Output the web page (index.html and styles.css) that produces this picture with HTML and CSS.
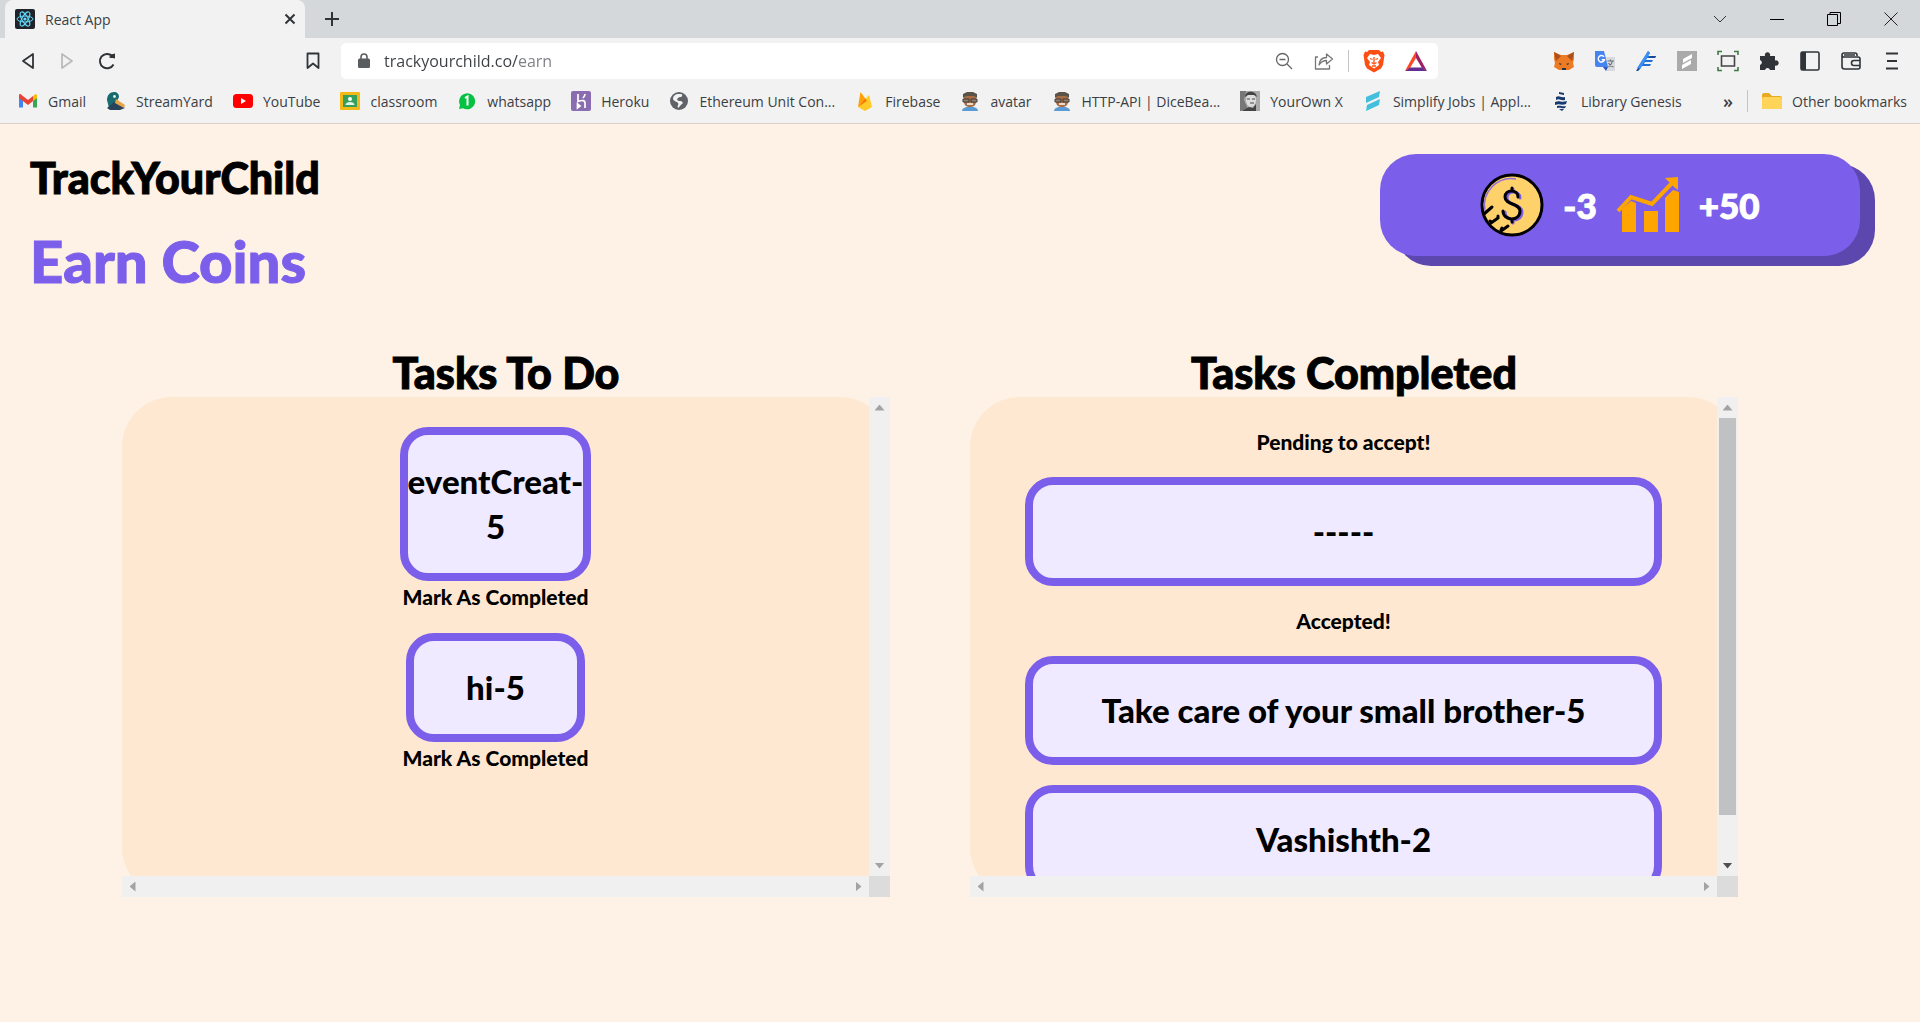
FILE: index.html
```html
<!DOCTYPE html>
<html lang="en">
<head>
  <meta charset="utf-8">
  <title>React App</title>
  <link rel="stylesheet" href="styles.css">
</head>
<body>
  <div class="browser">
    <div class="tab-strip">
      <div class="tab">
        <svg class="icon" viewBox="0 0 20 20"><rect width="20" height="20" rx="2" fill="#20232a"/><g fill="none" stroke="#61dafb"><ellipse cx="10" cy="10" rx="8" ry="3"/><ellipse cx="10" cy="10" rx="8" ry="3" transform="rotate(60 10 10)"/><ellipse cx="10" cy="10" rx="8" ry="3" transform="rotate(120 10 10)"/></g><circle cx="10" cy="10" r="1.6" fill="#61dafb"/></svg>
        <span class="tab-title">React App</span>
        <button class="icon-btn" aria-label="Close tab"><svg width="12" height="12" viewBox="0 0 12 12"><path d="M1.5 1.5l9 9m0-9l-9 9" stroke="#303438" stroke-width="2"/></svg></button>
      </div>
      <button class="icon-btn new-tab" aria-label="New tab"><svg width="16" height="16" viewBox="0 0 16 16"><path d="M8 1v14M1 8h14" stroke="#303438" stroke-width="2"/></svg></button>
      <div class="window-buttons">
        <button class="icon-btn" aria-label="Search tabs"><svg width="14" height="14" viewBox="0 0 14 14"><path d="M1 4l6 6 6-6" fill="none" stroke="#303438"/></svg></button>
        <button class="icon-btn" aria-label="Minimize"><svg width="14" height="14" viewBox="0 0 14 14"><path d="M0 7.500h14" stroke="#000"/></svg></button>
        <button class="icon-btn" aria-label="Restore"><svg width="14" height="14" viewBox="0 0 14 14"><path d="M.5 2.500h10v11H.5zM3 2V.500h10.500v11H11" fill="none" stroke="#000"/></svg></button>
        <button class="icon-btn" aria-label="Close"><svg width="14" height="14" viewBox="0 0 14 14"><path d="M.5.5l13 13m0-13l-13 13" stroke="#222"/></svg></button>
      </div>
    </div>

    <div class="toolbar">
      <div class="nav-buttons">
        <button class="icon-btn" aria-label="Back"><svg width="18" height="20" viewBox="0 0 18 20"><path d="M14 3v14L4 10z" fill="none" stroke="#303438" stroke-width="1.800" stroke-linejoin="round"/></svg></button>
        <button class="icon-btn" aria-label="Forward"><svg width="18" height="20" viewBox="0 0 18 20"><path d="M4 3v14l10-7z" fill="none" stroke="#bbb" stroke-width="1.800" stroke-linejoin="round"/></svg></button>
        <button class="icon-btn" aria-label="Reload"><svg width="20" height="20" viewBox="0 0 20 20"><path d="M16.500 13.500A7.200 7.200 0 1 1 15 4.800" fill="none" stroke="#303438" stroke-width="2"/><path d="M12 6.500c3 1 5 .500 6 1V2.500l-4 1z" fill="#303438"/></svg></button>
        <button class="icon-btn mark" aria-label="Bookmark this page"><svg width="14" height="18" viewBox="0 0 14 18"><path d="M1.500 1.500h11v14.500L7 11.500 1.500 16z" fill="none" stroke="#303438" stroke-width="1.800" stroke-linejoin="round"/></svg></button>
      </div>
      <div class="address">
        <svg width="12" height="16" viewBox="0 0 12 16"><rect y="5.500" width="12" height="9.500" rx="1.500" fill="#5a5d60"/><path d="M3 6V4a3 3 0 0 1 6 0v2" fill="none" stroke="#5a5d60" stroke-width="1.600"/></svg>
        <input class="url" type="text" aria-label="Address" value="trackyourchild.co/earn">
        <button class="icon-btn" aria-label="Zoom"><svg class="icon" viewBox="0 0 20 20"><g fill="none" stroke="#666" stroke-width="1.300"><circle cx="8.500" cy="8.500" r="6"/><path d="M13 13l5 5M5.500 8.500h6"/></g></svg></button>
        <button class="icon-btn" aria-label="Share"><svg class="icon" viewBox="0 0 20 20"><path d="M4 6H1.500v12h14v-4M5 14c.500-5 3-7.500 7.500-7.500V3l6 5-6 5V9.500C9 9.500 7 11 5 14z" fill="none" stroke="#777" stroke-width="1.300" stroke-linejoin="round"/></svg></button>
        <span class="divider"></span>
        <button class="icon-btn" aria-label="Brave Shields"><svg width="22" height="24" viewBox="0 0 22 24"><path d="M6 1h10l2 2 2-.500 1.500 3.500-1.500 10-2 3.500-7 4-7-4L2 16 .500 6 2 2.500 4 3z" fill="#fb4f14"/><path d="M7 5l4 1 4-1 3 4-3 4 1 3-5 3.500L6 16l1-3-3-4z" fill="#fff"/><path d="M7 9.500l2.500 1M15 9.500l-2.500 1M11 8v6M8.500 13.500L11 15l2.500-1.500M9 17h4" fill="none" stroke="#fb4f14" stroke-width="1.300"/></svg></button>
        <button class="icon-btn" aria-label="Brave Rewards"><svg width="22" height="20" viewBox="0 0 22 20"><path d="M11 0L0 20l5-3 6-10z" fill="#ff4724"/><path d="M11 0l11 20-5-3-6-10z" fill="#9e1f63"/><path d="M0 20h22l-5-3.500H5z" fill="#662d91"/></svg></button>
      </div>
      <div class="extensions">
        <button class="icon-btn" aria-label="MetaMask"><svg class="ext" viewBox="0 0 22 22"><path d="M1 2l7 3h6l7-3v7l-1 4 1 4-5 3H6l-5-3 1-4-1-4z" fill="#ee7b24"/><path d="M1 2l7 4-5 5zM21 2l-7 4 5 5z" fill="#a9501d"/><path d="M6 13l3 1-2 1zM16 13l-3 1 2 1zM9 18h4v2H9z" fill="#233447"/></svg></button>
        <button class="icon-btn" aria-label="Google Translate"><svg class="ext" viewBox="0 0 22 22"><path d="M9 7h12v14H12z" fill="#d8dadd"/><path d="M1 1h9l4 16H3a2 2 0 0 1-2-2z" fill="#4684ee"/><path d="M9 17h5l-2 4z" fill="#2c58c5"/><path d="M10 6.800a3.200 3.200 0 1 0 .500 3H7.700" fill="none" stroke="#fff" stroke-width="1.400"/><path d="M13.500 11H20m-3.500-1.500V11m2 0c-.500 3-2 4.500-4 6m0-4c1 2 3 3.500 5 4" fill="none" stroke="#6b737c" stroke-width="1.200"/></svg></button>
        <button class="icon-btn" aria-label="Etherscan"><svg class="ext" viewBox="0 0 22 22"><path d="M2 20L13 1l2 2-2 3h8l-1 2h-8l-1 2h7l-1 2h-7l-1 2h7l-1 2H7l-2 3z" fill="#1f6fd6"/><path d="M2 18L13 1l2 2L5 19z" fill="#3c90f0"/><path d="M1 21l2-3 2 1-2 2zM15 6h6l-1 2h-6z" fill="#174a9c"/></svg></button>
        <button class="icon-btn" aria-label="Simplify"><svg class="ext" viewBox="0 0 22 22"><path d="M1 1h20v20H1z" fill="#aaa"/><path d="M7 9l9-5v4L7 13zM6 15l9-5v4l-9 5z" fill="#fff"/></svg></button>
        <button class="icon-btn" aria-label="Screen capture"><svg class="ext" viewBox="0 0 22 22"><path d="M4.500 6h13v10h-13z" fill="none" stroke="#444" stroke-width="1.600"/><path d="M1 5V1.500h4M17 1.500h4V5M1 17v3.500h4M17 20.500h4V17" fill="none" stroke="#3e7a46" stroke-width="1.600"/></svg></button>
        <button class="icon-btn" aria-label="Extensions"><svg class="ext" viewBox="0 0 22 22"><path d="M2 6h5a2.700 2.700 0 1 1 5 0h5v4.500a2.700 2.700 0 1 1 0 5V20h-5a2.600 2.600 0 0 0-5 0H2v-5a2.600 2.600 0 0 0 0-5z" fill="#303438"/></svg></button>
        <button class="icon-btn" aria-label="Sidebar"><svg class="ext" viewBox="0 0 22 22"><rect x="2" y="2" width="18" height="18" rx="1.500" fill="none" stroke="#303438" stroke-width="1.600"/><path d="M2 2h5v18H2z" fill="#303438"/></svg></button>
        <button class="icon-btn" aria-label="Wallet"><svg class="ext" viewBox="0 0 22 22"><path d="M17 6V5a2 2 0 0 0-2-2H4a2 2 0 0 0 0 4h14a2 2 0 0 1 2 2v8a2 2 0 0 1-2 2H4.500A2.500 2.500 0 0 1 2 16.500V5M20 10.500h-6a2.500 2.500 0 0 0 0 5h6M4 5h11" fill="none" stroke="#303438" stroke-width="1.600"/></svg></button>
        <button class="icon-btn" aria-label="Menu"><svg class="ext" viewBox="0 0 22 22"><path d="M5 3.500h12M6 11h10M5 18.500h12" stroke="#303438" stroke-width="1.800"/></svg></button>
      </div>
    </div>

    <nav class="bookmarks">
      <a href="#"><svg class="icon" viewBox="0 0 20 20"><path d="M1 4v12.500h4V8z" fill="#4285f4"/><path d="M19 4v12.500h-4V8z" fill="#34a853"/><path d="M15 5l2-1.500c1-.700 2 0 2 1V7l-4 3z" fill="#fbbc04"/><path d="M1 7V4.500c0-1.500 1.200-1.800 2-1L10 9l5-4v5l-5 4z" fill="#ea4335"/></svg>Gmail</a>
      <a href="#"><svg class="icon" viewBox="0 0 20 20"><path d="M1 9c0-5 3-8 7-8 3 0 5 2 5 5l-3 6-7 5z" fill="#176a70"/><path d="M1 17l7-6 11 6-5 2H4z" fill="#29435a"/><path d="M10 8l9 6-1 3-9-5z" fill="#e5a445"/><circle cx="8.500" cy="5.500" r="1.400" fill="#eee"/></svg>StreamYard</a>
      <a href="#"><svg class="icon" viewBox="0 0 20 20"><rect y="3" width="20" height="14" rx="3.500" fill="#f00"/><path d="M8 7l5 3-5 3z" fill="#fff"/></svg>YouTube</a>
      <a href="#"><svg class="icon" viewBox="0 0 20 20"><rect y="1" width="20" height="18" rx="1" fill="#f4b916"/><path d="M3 4h14v12H3z" fill="#35a05b"/><circle cx="10" cy="8" r="2" fill="#fff"/><path d="M5.500 14c0-4 9-4 9 0z" fill="#e6f4ea"/></svg>classroom</a>
      <a href="#"><svg class="icon" viewBox="0 0 20 20"><path d="M2 18l1-4a8 8 0 1 1 3 3.200z" fill="#07c143"/><path d="M8 7l2.500-1.500V14.500" fill="none" stroke="#fff" stroke-width="2"/></svg>whatsapp</a>
      <a href="#"><svg class="icon" viewBox="0 0 20 20"><rect width="20" height="20" rx="2" fill="#8a6db1"/><path d="M7 3v7.500c4-1.500 7-1.500 7 1.500v5M14 3c0 2-1 3-2 4M6.500 13l2.500 2-2.500 2z" fill="none" stroke="#fff" stroke-width="1.700"/></svg>Heroku</a>
      <a href="#"><svg class="icon" viewBox="0 0 20 20"><circle cx="10" cy="10" r="9" fill="#5f6368"/><path d="M4 8c1 3 4 2 5 4s-1 2 0 5c2-1 2-3 4-4s0-3-2-3-4-1-2-3 3 0 4-2-1-2-3-2C6 3 4 5 4 8z" fill="#f2f2f2"/></svg>Ethereum Unit Con...</a>
      <a href="#"><svg class="icon" viewBox="0 0 20 20"><path d="M3 16L5.500 1 10 7z" fill="#ffa000"/><path d="M3 16L14 4l3 12-7 4z" fill="#ffca28"/><path d="M3 16l7-9 2 3z" fill="#f57c00"/></svg>Firebase</a>
      <a href="#"><svg class="icon" viewBox="0 0 20 20"><path d="M2 20c0-6 16-6 16 0z" fill="#5b9bd5"/><rect x="4" y="2" width="12" height="14" rx="5" fill="#a86d43"/><path d="M3 7V3l4-2h6l4 2v4l-3-2H6z" fill="#5b5348"/><path d="M3 8h6v3H3zm8 0h6v3h-6z" fill="#8a8174" stroke="#493b30"/><path d="M7 13h6" stroke="#fff" stroke-width="1.500"/></svg>avatar</a>
      <a href="#"><svg class="icon" viewBox="0 0 20 20"><path d="M2 20c0-6 16-6 16 0z" fill="#5b9bd5"/><rect x="4" y="2" width="12" height="14" rx="5" fill="#a86d43"/><path d="M3 7V3l4-2h6l4 2v4l-3-2H6z" fill="#5b5348"/><path d="M3 8h6v3H3zm8 0h6v3h-6z" fill="#8a8174" stroke="#493b30"/><path d="M7 13h6" stroke="#fff" stroke-width="1.500"/></svg>HTTP-API | DiceBea...</a>
      <a href="#"><svg class="icon" viewBox="0 0 20 20"><path d="M0 0h20v20H0z" fill="#aaa"/><path d="M0 20V0h6L4 9l4 9z" fill="#777"/><ellipse cx="11" cy="9" rx="5" ry="7" fill="#ddd"/><path d="M5 6c0-7 11-7 12 0l-3-2H8zM2 20l7-4 4 1 3-4v7z" fill="#444"/><path d="M7 8h3m2 0h3m-5 4h4" stroke="#444"/></svg>YourOwn X</a>
      <a href="#"><svg class="icon" viewBox="0 0 20 20"><path d="M3 6l14-6-1 6-13 6zM4 14l13-6-1 6-13 6z" fill="#42bfdc"/></svg>Simplify Jobs | Appl...</a>
      <a href="#"><svg class="icon" viewBox="0 0 20 20"><path d="M8 1l5 1v2L8 3zM5 6c4-2 4 1 9 0v3c-5 1-5-2-9 0zM4 11c5-2 6 1 12-1l-1 3c-5 2-6-1-11 1zM6 15c4-1 5 1 9 0l-1 2c-3 1-4-1-8 0zM8 18h5l-2 2z" fill="#16396f"/></svg>Library Genesis</a>
      <button class="more" aria-label="More bookmarks">»</button>
      <span class="divider"></span>
      <a href="#"><svg class="icon" viewBox="0 0 20 20"><path d="M0 4a2 2 0 0 1 2-2h5l3 3h8a2 2 0 0 1 2 2v9a2 2 0 0 1-2 2H2a2 2 0 0 1-2-2z" fill="#e8ac20"/><rect y="6" width="20" height="12" rx="2" fill="#ffd458"/></svg>Other bookmarks</a>
    </nav>
  </div>

  <div class="page">
    <header class="header">
      <div class="titles">
        <h2 class="brand">TrackYourChild</h2>
        <h1 class="page-title">Earn Coins</h1>
      </div>
      <div class="score">
        <svg width="64" height="64" viewBox="0 0 64 64"><circle cx="32" cy="32" r="30" fill="#ffd16b" stroke="#000" stroke-width="3"/><path d="M5 38a27 27 0 0 1 31-32" fill="none" stroke="#9271d8" stroke-width="1.500"/><g fill="none" stroke-width="3" stroke-linecap="round"><path d="M40 25c0-8-13-8-13 0 0 8 15 6 15 14 0 11-17 10-17 0M33 19v-3M33 46v4" stroke="#7c5fe6"/><path d="M38 24c0-8-13-8-13 0 0 8 15 6 15 14 0 11-17 10-17 0M32 18v-3M32 46v3" stroke="#000"/><path d="M4 41l8-7M11 50l7-5v-2M12 49l-2-1M21 58l7-5M21 57l1-2" stroke="#000"/></g></svg>
        <span class="score-value">-3</span>
        <svg width="64" height="64" viewBox="0 0 64 64"><path d="M6 36l9-8 5 2v29H6zM28 38h14v21H28zM49 25l8-8 6 2v40H49z" fill="#ffa500"/><path d="M2 38l13-14 21 7 20-21" fill="none" stroke="#ffa500" stroke-width="4"/><path d="M49 5l13-1v13l-4-3-6-6z" fill="#ffa500"/></svg>
        <span class="score-value">+50</span>
      </div>
    </header>

    <main class="columns">
      <section class="column">
        <h2 class="column-title">Tasks To Do</h2>
        <div class="panel">
          <div class="panel-content todo">
            <div class="task">
              <div class="card">eventCreat-5</div>
              <button class="complete">Mark As Completed</button>
            </div>
            <div class="task">
              <div class="card">hi-5</div>
              <button class="complete">Mark As Completed</button>
            </div>
          </div>
          <div class="bar vertical">
            <button class="arrow up" aria-label="Scroll up"></button>
            <button class="arrow down" aria-label="Scroll down"></button>
          </div>
          <div class="bar horizontal">
            <button class="arrow left" aria-label="Scroll left"></button>
            <button class="arrow right" aria-label="Scroll right"></button>
          </div>
          <div class="corner"></div>
        </div>
      </section>

      <section class="column">
        <h2 class="column-title">Tasks Completed</h2>
        <div class="panel">
          <div class="panel-content done">
            <p class="status">Pending to accept!</p>
            <div class="card">-----</div>
            <p class="status">Accepted!</p>
            <div class="card">Take care of your small brother-5</div>
            <div class="card">Vashishth-2</div>
          </div>
          <div class="bar vertical">
            <button class="arrow up" aria-label="Scroll up"></button>
            <div class="thumb"></div>
            <button class="arrow down active" aria-label="Scroll down"></button>
          </div>
          <div class="bar horizontal">
            <button class="arrow left" aria-label="Scroll left"></button>
            <button class="arrow right" aria-label="Scroll right"></button>
          </div>
          <div class="corner"></div>
        </div>
      </section>
    </main>
  </div>
</body>
</html>
```
FILE: styles.css
```css
* {
  box-sizing: border-box;
  margin: 0;
  padding: 0;
}

body {
  min-height: 100vh;
  background-color: #fef1e5;
  font-family: Lato, sans-serif;
  color: #000;
}

button {
  border: none;
  background: none;
  font: inherit;
  color: inherit;
  cursor: pointer;
}

svg {
  display: block;
  flex-shrink: 0;
}

/* browser bars */
.browser {
  background-color: #f2f2f2;
  border-bottom: 1px solid #dccfca;
  font-family: "Open Sans", "Noto Sans", sans-serif;
  font-size: 14px;
  color: #3b3e42;
}

.icon {
  width: 20px;
  height: 20px;
}

.ext {
  width: 22px;
  height: 22px;
}

.icon-btn {
  display: flex;
  align-items: center;
  justify-content: center;
}

.divider {
  width: 1px;
  height: 22px;
  background-color: #c4c4c4;
}

.tab-strip {
  display: flex;
  align-items: center;
  height: 38px;
  padding-left: 5px;
  background-color: #d4d8db;
}

.tab {
  display: flex;
  align-items: center;
  gap: 10px;
  width: 300px;
  height: 38px;
  padding: 0 9px 0 10px;
  background-color: #f2f2f2;
  border-radius: 8px 8px 0 0;
}

.tab-title {
  flex: 1;
}

.new-tab {
  margin-left: 19px;
}

.window-buttons {
  display: flex;
  gap: 43px;
  margin-left: auto;
  padding-right: 22px;
}

.toolbar {
  display: flex;
  align-items: center;
  height: 45px;
}

.nav-buttons {
  display: flex;
  align-items: center;
  gap: 21px;
  width: 341px;
  padding: 0 21px 0 19px;
}

.mark {
  margin-left: auto;
}

.address {
  flex: 1;
  display: flex;
  align-items: center;
  gap: 20px;
  height: 36px;
  padding: 0 11px 0 17px;
  background-color: #fff;
  border-radius: 5px;
}

.address .divider {
  margin: 0 -6px;
}

.url {
  flex: 1;
  min-width: 0;
  margin-left: -6px;
  border: none;
  outline: none;
  font: 16px "Open Sans", "Noto Sans", sans-serif;
  /* the path is paler than the host name */
  background: linear-gradient(90deg, #3b3e42 134px, #7b7e82 134px);
  -webkit-background-clip: text;
  background-clip: text;
  color: transparent;
}

.extensions {
  display: flex;
  gap: 19px;
  margin-left: 115px;
  padding-right: 17px;
}

.bookmarks {
  display: flex;
  align-items: center;
  gap: 20px;
  height: 40px;
  padding: 0 13px 4px 18px;
}

.bookmarks a {
  display: flex;
  align-items: center;
  gap: 10px;
  white-space: nowrap;
  color: inherit;
  text-decoration: none;
}

.more {
  margin-left: auto;
  font-size: 18px;
  font-weight: 600;
}

.bookmarks .divider {
  margin: 0 -6px;
}

/* page */
.header {
  display: flex;
  justify-content: space-between;
  align-items: flex-start;
  padding: 30px 60px 0 30px;
}

.brand,
.page-title,
.column-title,
.score-value {
  font-weight: 900;
  -webkit-text-stroke: 1px;
}

.brand {
  font-size: 43px;
  line-height: 48px;
}

.page-title {
  margin-top: 24px;
  font-size: 58px;
  line-height: 70px;
  color: #7b5feb;
}

.score {
  display: flex;
  align-items: center;
  justify-content: center;
  gap: 19px;
  width: 480px;
  height: 102px;
  border-radius: 36px;
  background-color: #7b5feb;
  box-shadow: 15px 10px #5b47ad;
}

.score-value {
  font-size: 35px;
  color: #fff;
}

.columns {
  display: flex;
  gap: 80px;
  margin-top: 53px;
  padding: 0 182px 0 122px;
}

.column {
  flex: 1;
  min-width: 0;
}

.column-title {
  font-size: 43px;
  line-height: 48px;
  text-align: center;
}

.panel {
  display: grid;
  grid-template-columns: 1fr 21px;
  grid-template-rows: 1fr 21px;
  height: 500px;
  background-color: #fee8d1;
  border-radius: 50px;
}

.panel-content {
  display: flex;
  flex-direction: column;
  gap: 20px;
  padding: 30px 55px 0;
  overflow: hidden;
}

.todo {
  align-items: center;
}

.task {
  display: flex;
  flex-direction: column;
  width: min-content;
}

.task .card {
  margin: 0 4px;
}

.card {
  flex-shrink: 0;
  padding: 24px 0;
  border: 8px solid #7b5feb;
  border-radius: 28px;
  background-color: #efeaff;
  font-size: 33px;
  font-weight: 900;
  line-height: 45px;
  text-align: center;
}

.complete {
  font-size: 21px;
  font-weight: 900;
  line-height: 32px;
  white-space: nowrap;
}

.status {
  font-size: 21px;
  font-weight: 900;
  line-height: 30px;
  text-align: center;
}

/* scroll bars */
.bar {
  display: flex;
  justify-content: space-between;
  background-color: #f0f0f0;
}

.vertical {
  flex-direction: column;
}

.thumb {
  flex: 1;
  margin: 0 2px 40px;
  background-color: #c0c1c3;
}

.corner {
  background-color: #dcdcdc;
}

.arrow {
  display: grid;
  place-items: center;
  width: 21px;
  height: 21px;
}

.arrow::before {
  content: "";
  width: 10px;
  height: 6px;
  background-color: #a3a3a3;
}

.arrow.active::before {
  background-color: #505050;
}

.up::before {
  clip-path: polygon(50% 0, 100% 100%, 0 100%);
}

.down::before {
  clip-path: polygon(0 0, 100% 0, 50% 100%);
}

.left::before {
  width: 6px;
  height: 10px;
  clip-path: polygon(0 50%, 100% 0, 100% 100%);
}

.right::before {
  width: 6px;
  height: 10px;
  clip-path: polygon(0 0, 100% 50%, 0 100%);
}
```
